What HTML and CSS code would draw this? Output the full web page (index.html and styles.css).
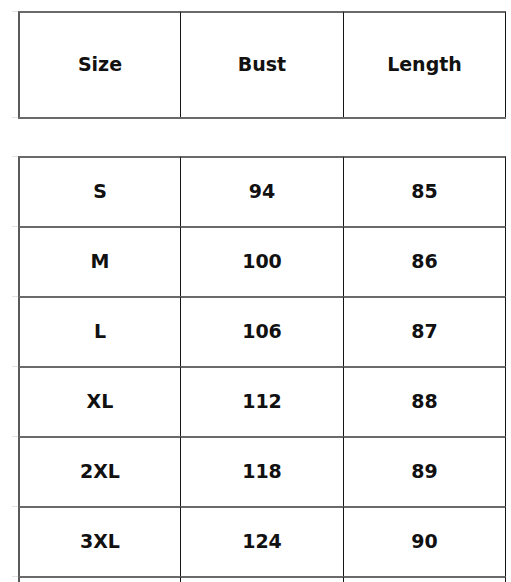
FILE: index.html
```html
<!DOCTYPE html>
<html lang="en">
<head>
<meta charset="utf-8">
<title>Size chart</title>
<link rel="stylesheet" href="styles.css">
</head>
<body>
<div class="sheet">
  <div class="block head-block">
    <div class="row head">
      <div class="gutter"></div>
      <div class="cell first">Size</div>
      <div class="cell">Bust</div>
      <div class="cell">Length</div>
    </div>
    <div class="row closer">
      <div class="gutter"></div>
      <div class="cell first"></div>
      <div class="cell"></div>
      <div class="cell"></div>
    </div>
  </div>
  <div class="block body-block">
    <div class="row"><div class="gutter"></div><div class="cell first">S</div><div class="cell">94</div><div class="cell">85</div></div>
    <div class="row"><div class="gutter"></div><div class="cell first">M</div><div class="cell">100</div><div class="cell">86</div></div>
    <div class="row"><div class="gutter"></div><div class="cell first">L</div><div class="cell">106</div><div class="cell">87</div></div>
    <div class="row"><div class="gutter"></div><div class="cell first">XL</div><div class="cell">112</div><div class="cell">88</div></div>
    <div class="row"><div class="gutter"></div><div class="cell first">2XL</div><div class="cell">118</div><div class="cell">89</div></div>
    <div class="row"><div class="gutter"></div><div class="cell first">3XL</div><div class="cell">124</div><div class="cell">90</div></div>
    <div class="row"><div class="gutter"></div><div class="cell first"></div><div class="cell"></div><div class="cell"></div></div>
  </div>
</div>
</body>
</html>
```
FILE: styles.css
```css
html, body {
  margin: 0;
  padding: 0;
  background: #ffffff;
  overflow: hidden;
}

.sheet {
  padding: 11px 0 0 12px;
  font-family: "DejaVu Sans", "Liberation Sans", sans-serif;
  font-weight: bold;
  font-size: 19px;
  color: #111111;
}

.block {
  display: flex;
  flex-direction: column;
}

.body-block {
  margin-top: 39px;
}

.row {
  display: grid;
  grid-template-columns: 6px 163px 163px 162px;
  height: 70px;
}

.row.head {
  height: 106px;
}

.row.closer {
  height: 0;
}

.gutter {
  border-top: 1px solid #e4e4e4;
}

.cell {
  border-top: 2px solid #6a6a6a;
  border-right: 1px solid #151515;
  display: flex;
  align-items: center;
  justify-content: center;
  padding-bottom: 2px;
}

.cell.first {
  border-left: 2px solid #5a5a5a;
}

.closer .cell {
  border-right: none;
  border-left: none;
}
```
